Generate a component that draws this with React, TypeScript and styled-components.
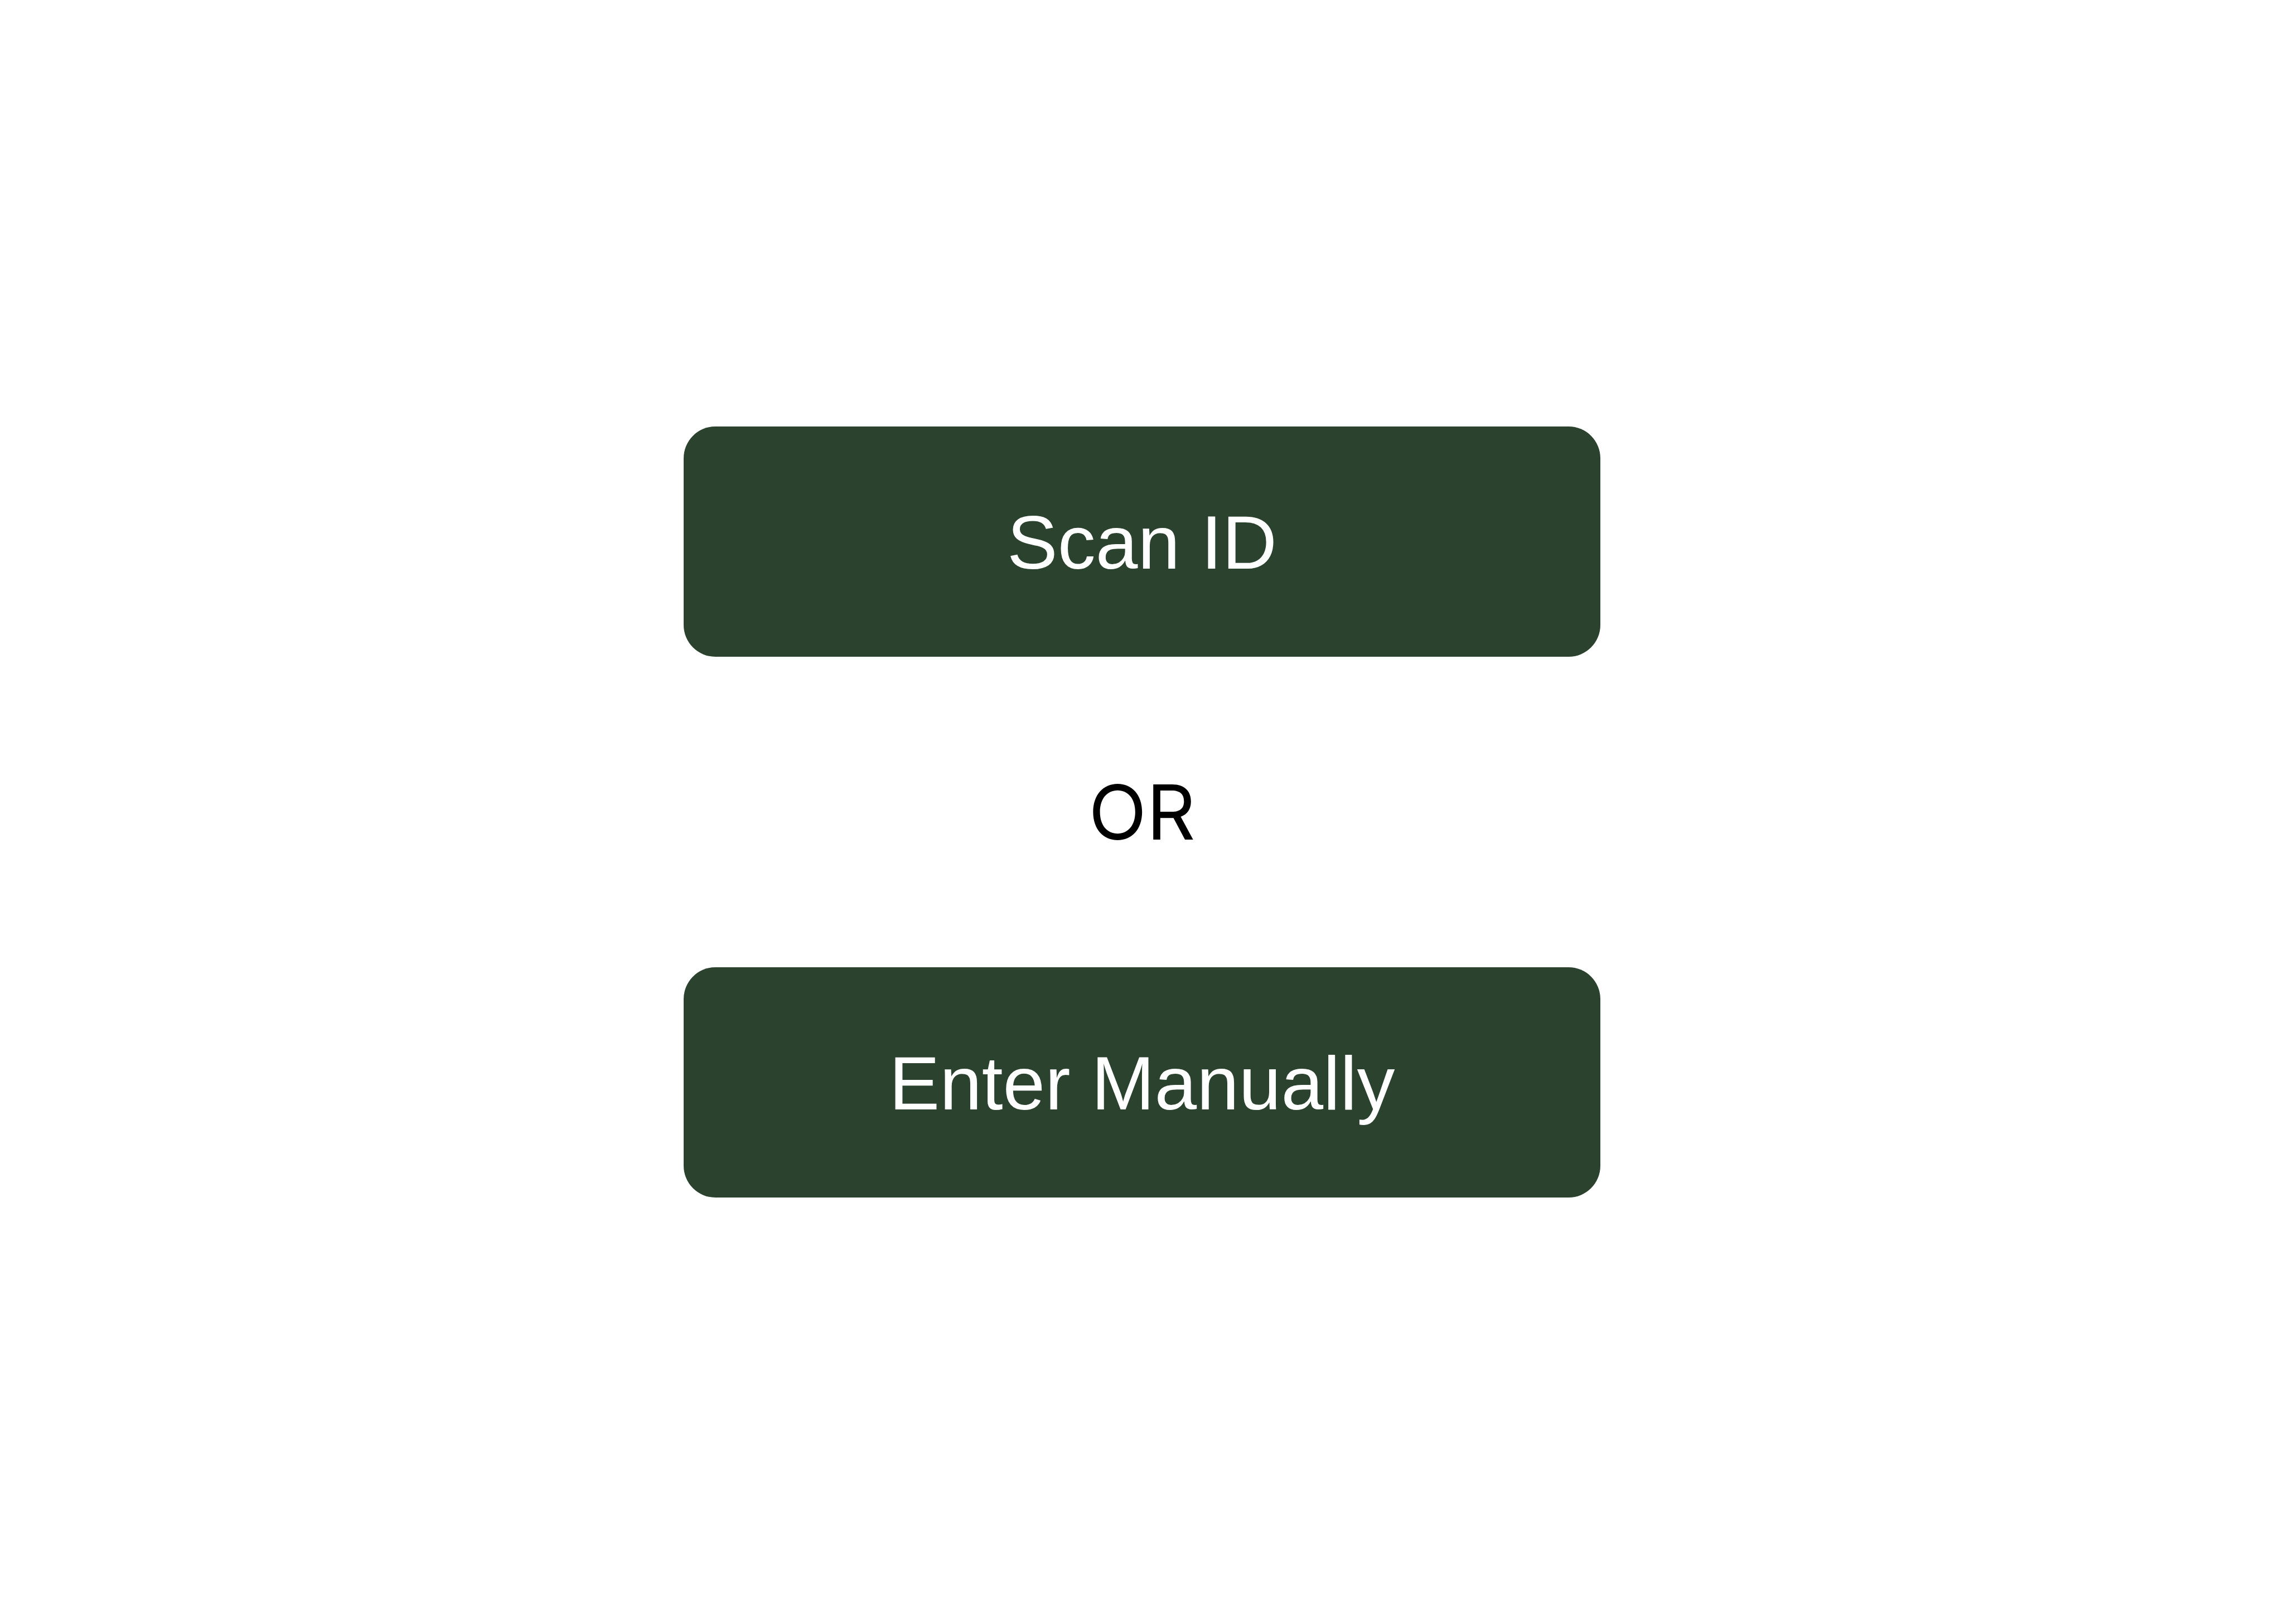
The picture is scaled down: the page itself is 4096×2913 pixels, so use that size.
import React from "react";
import styled, { createGlobalStyle } from "styled-components";

const GlobalStyle = createGlobalStyle`
  * {
    box-sizing: border-box;
  }

  body {
    margin: 0;
    background: #ffffff;
  }
`;

const Page = styled.main`
  display: flex;
  flex-direction: column;
  align-items: center;
  justify-content: center;
  gap: 196px;
  min-height: 100vh;
`;

const ActionButton = styled.button`
  width: 1644px;
  max-width: 100%;
  padding: 126px 48px 122px;
  border: 0;
  border-radius: 57px;
  background: #2b422e;
  color: #ffffff;
  font-family: "Helvetica Neue", "Liberation Sans", Arial, sans-serif;
  font-size: 136px;
  font-weight: 400;
  line-height: 165px;
  text-align: center;
  cursor: pointer;
`;

const Divider = styled.p`
  margin: 0;
  color: #000000;
  font-family: Inter, sans-serif;
  font-size: 136px;
  font-weight: 400;
  line-height: 165px;
`;

export default function App() {
  return (
    <>
      <GlobalStyle />
      <Page>
        <ActionButton type="button">Scan ID</ActionButton>
        <Divider>OR</Divider>
        <ActionButton type="button">Enter Manually</ActionButton>
      </Page>
    </>
  );
}
